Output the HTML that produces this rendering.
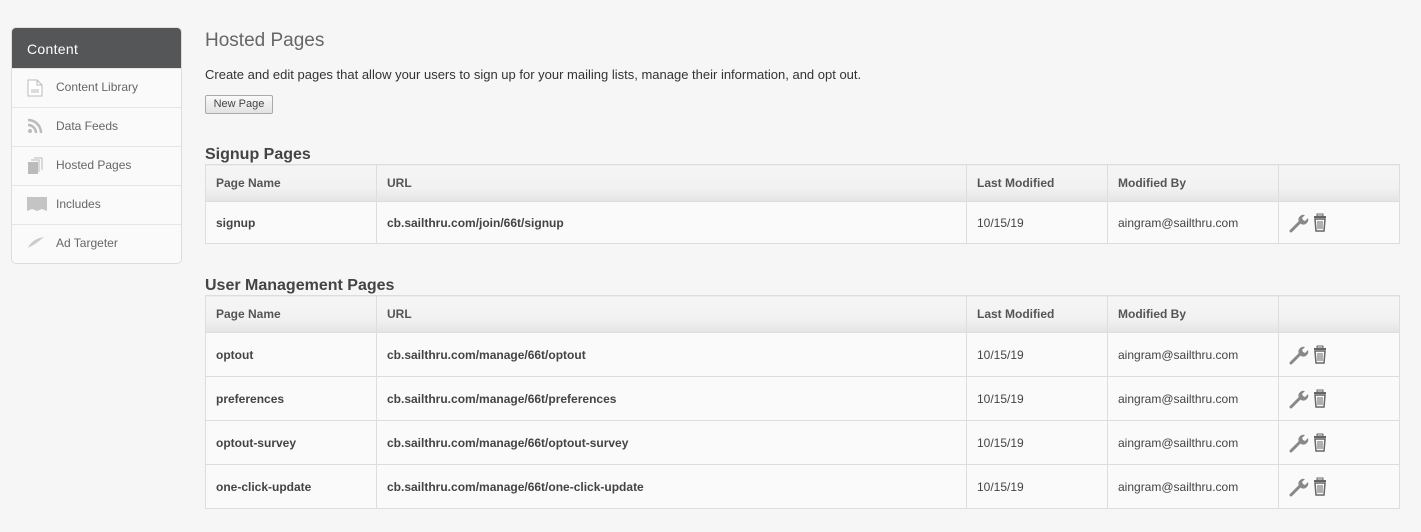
<!DOCTYPE html>
<html><head><style>
body{margin:0;width:1421px;height:532px;background:#f6f6f6;font-family:"Liberation Sans",Arial,sans-serif;color:#333;position:relative;overflow:hidden}
.side{position:absolute;left:11px;top:27px;width:169px;height:235px;border:1px solid #ddd;border-radius:5px;background:#fafafa;overflow:hidden}
.side .hd{height:40px;background:#555658;color:#fff;font-size:14px;line-height:42px;padding-left:15px;letter-spacing:.3px}
.side .it{height:38px;border-top:1px solid #e6e6e6;font-size:12px;color:#666;line-height:37px;padding-left:44px;position:relative}
.side .it:first-of-type{border-top:none}
.side .ic{position:absolute;left:15px;top:10px}
h1{position:absolute;left:205px;top:30px;margin:0;font-weight:normal;font-size:19px;color:#666}
.desc{position:absolute;left:205px;top:67px;font-size:13px;color:#333}
.btn{position:absolute;left:205px;top:95px;width:66px;height:17px;border:1px solid #aaa;border-radius:2px;background:linear-gradient(#fafafa,#e2e2e2);font-size:11px;line-height:17px;text-align:center;color:#444}
h2{position:absolute;left:205px;margin:0;font-size:16px;font-weight:bold;color:#444}
table{position:absolute;left:205px;width:1195px;border-collapse:collapse;font-size:12px;background:#fafafa}
td,th{border:1px solid #ddd;padding:0 0 0 10px;text-align:left}
th{height:36px;background:linear-gradient(#f5f5f5,#f2f2f2 60%,#e4e4e4);color:#555;font-weight:bold}
td{color:#444}
td.b{font-weight:bold}
</style></head><body>
<div class="side">
<div class="hd">Content</div>
<div class="it"><svg class="ic" width="16" height="18" viewBox="0 0 16 18"><path d="M1 1h9l5 5v11H1z" fill="#fff" stroke="#bbb"/><path d="M10 1v5h5M4 11h8M4 13h8" stroke="#bbb" fill="none"/></svg>Content Library</div>
<div class="it"><svg class="ic" width="18" height="16" viewBox="0 0 18 16"><circle cx="3" cy="13" r="2" fill="#bbb"/><path d="M1 7a8 8 0 0 1 8 8M1 2a13 13 0 0 1 13 13" stroke="#bbb" stroke-width="2.5" fill="none"/></svg>Data Feeds</div>
<div class="it"><svg class="ic" width="18" height="18" viewBox="0 0 18 18"><rect x="1" y="5" width="10" height="12" fill="#bbb"/><path d="M12 15V3H4M15 13V1H7" stroke="#bbb" fill="none"/></svg>Hosted Pages</div>
<div class="it"><svg class="ic" width="20" height="16" viewBox="0 0 20 16"><path d="M0 1h20v14l-5-2-5 2-5-2-5 2z" fill="#c4c4c4"/></svg>Includes</div>
<div class="it"><svg class="ic" width="18" height="14" viewBox="0 0 18 14"><path d="M1 13C4 6 10 3 17 2 12 6 9 9 1 13z" fill="#ccc"/></svg>Ad Targeter</div>
</div>
<h1>Hosted Pages</h1>
<div class="desc">Create and edit pages that allow your users to sign up for your mailing lists, manage their information, and opt out.</div>
<div class="btn">New Page</div>
<h2 style="top:146px">Signup Pages</h2>
<table style="top:164px">
<colgroup><col style="width:171px"><col style="width:590px"><col style="width:141px"><col style="width:171px"><col></colgroup>
<tr><th>Page Name</th><th>URL</th><th>Last Modified</th><th>Modified By</th><th></th></tr>
<tr style="height:42px"><td class="b">signup</td><td class="b">cb.sailthru.com/join/66t/signup</td><td>10/15/19</td><td>aingram@sailthru.com</td><td>ICONS</td></tr>
</table>
<h2 style="top:277px">User Management Pages</h2>
<table style="top:295px">
<colgroup><col style="width:171px"><col style="width:590px"><col style="width:141px"><col style="width:171px"><col></colgroup>
<tr><th style="height:35px">Page Name</th><th>URL</th><th>Last Modified</th><th>Modified By</th><th></th></tr>
<tr style="height:44px"><td class="b">optout</td><td class="b">cb.sailthru.com/manage/66t/optout</td><td>10/15/19</td><td>aingram@sailthru.com</td><td>ICONS</td></tr>
<tr style="height:44px"><td class="b">preferences</td><td class="b">cb.sailthru.com/manage/66t/preferences</td><td>10/15/19</td><td>aingram@sailthru.com</td><td>ICONS</td></tr>
<tr style="height:44px"><td class="b">optout-survey</td><td class="b">cb.sailthru.com/manage/66t/optout-survey</td><td>10/15/19</td><td>aingram@sailthru.com</td><td>ICONS</td></tr>
<tr style="height:44px"><td class="b">one-click-update</td><td class="b">cb.sailthru.com/manage/66t/one-click-update</td><td>10/15/19</td><td>aingram@sailthru.com</td><td>ICONS</td></tr>
</table>
<script>
var ic='<svg width="40" height="20" viewBox="0 0 40 20" style="vertical-align:middle"><path d="M2 18L11 9" stroke="#888" stroke-width="3" stroke-linecap="round"/><path d="M10 9a5 5 0 0 1 6-7l-3 3 1 2 2 1 3-3a5 5 0 0 1-7 6z" fill="#888"/><rect x="25" y="3" width="12" height="2" fill="#666"/><rect x="28" y="1" width="6" height="2" fill="none" stroke="#666"/><path d="M26 6h10l-1 12h-8z" fill="none" stroke="#666" stroke-width="1.5"/><path d="M29 8v8M31 8v8M33 8v8" stroke="#666"/></svg>';
document.querySelectorAll('td').forEach(function(t){if(t.textContent=='ICONS')t.innerHTML=ic;});
</script>
</body></html>
